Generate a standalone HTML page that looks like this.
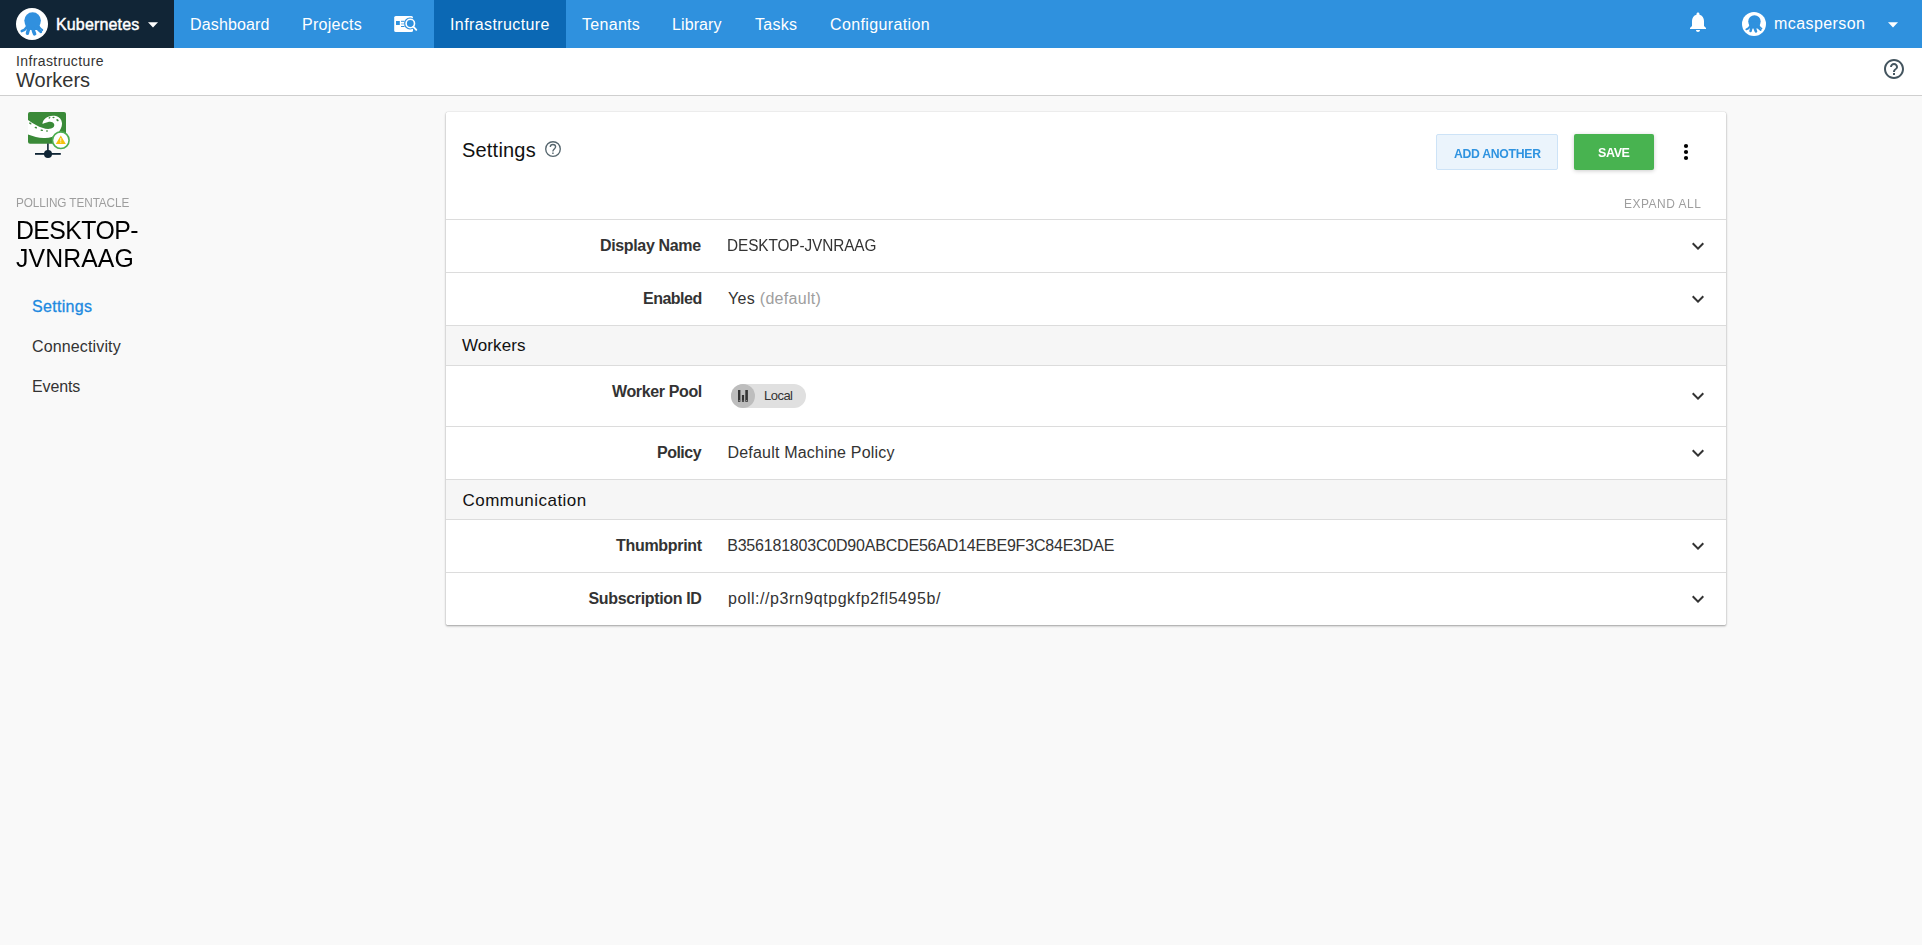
<!DOCTYPE html>
<html><head><meta charset="utf-8"><style>
*{box-sizing:border-box;margin:0;padding:0}
html,body{width:1922px;height:945px;overflow:hidden;background:#f9f9f9;font-family:"Liberation Sans",sans-serif;color:#333}
.t,.abs{position:absolute;white-space:nowrap}
.blk{position:absolute}
</style></head><body>

<div class="blk" style="left:0;top:0;width:1922px;height:48px;background:#2f91de"></div>
<div class="blk" style="left:0;top:0;width:174px;height:48px;background:#112536"></div>
<div class="blk" style="left:434px;top:0;width:132px;height:48px;background:#0b68b4"></div>
<div class="blk" style="left:0;top:48px;width:1922px;height:47px;background:#fff"></div>
<div class="blk" style="left:0;top:95px;width:1922px;height:1px;background:#cfcfcf"></div>
<!-- card -->
<div class="blk" style="left:446px;top:112px;width:1280px;height:513px;background:#fff;border-radius:1.5px;box-shadow:0 1px 3px rgba(0,0,0,.14),0 1px 2px rgba(0,0,0,.24),0 0 1px rgba(0,0,0,.22)"></div>
<div class="blk" style="left:446px;top:219px;width:1280px;height:1px;background:#dcdcdc"></div>
<div class="blk" style="left:446px;top:272px;width:1280px;height:1px;background:#dcdcdc"></div>
<div class="blk" style="left:446px;top:325px;width:1280px;height:41px;background:#f6f6f6;border-top:1px solid #dcdcdc;border-bottom:1px solid #dcdcdc"></div>
<div class="blk" style="left:446px;top:426px;width:1280px;height:1px;background:#dcdcdc"></div>
<div class="blk" style="left:446px;top:479px;width:1280px;height:41px;background:#f6f6f6;border-top:1px solid #dcdcdc;border-bottom:1px solid #dcdcdc"></div>
<div class="blk" style="left:446px;top:572px;width:1280px;height:1px;background:#dcdcdc"></div>
<!-- buttons -->
<div class="blk" style="left:1436px;top:134px;width:122px;height:36px;background:#ebf4fc;border:1px solid #cde3f7;border-radius:2px"></div>
<div class="blk" style="left:1574px;top:134px;width:80px;height:36px;background:#48b350;border-radius:2px;box-shadow:0 1px 4px rgba(0,0,0,.2)"></div>
<!-- chip -->
<div class="blk" style="left:731px;top:384px;width:75px;height:24px;background:#e0e0e0;border-radius:12px"></div>
<div class="blk" style="left:731px;top:384px;width:24px;height:24px;background:#bdbdbd;border-radius:12px"></div>


<!-- logo -->
<svg class="abs" style="left:16px;top:8px" width="32" height="32" viewBox="0 0 32 32">
 <circle cx="16" cy="16" r="16" fill="#fff"/>
 <circle cx="16.6" cy="12.5" r="8.3" fill="#3190de"/>
 <path d="M9.4 13 C9.3 17 9.6 19.5 10.8 21.5 L15.3 22 L20.9 22 L24.5 21.5 C23.4 19.5 23.6 17 23.8 13 Z" fill="#3190de"/><g fill="none" stroke="#3190de" stroke-linecap="round"><path d="M10.5 19.5 Q8.8 22.2 5.8 23.1" stroke-width="2.6"/><path d="M12.8 20.5 Q11.8 23.5 11.4 25.3" stroke-width="3.4"/><path d="M16.9 20.5 Q17.6 24 18.6 25.8" stroke-width="3.6"/><path d="M21.3 20.3 Q23.1 22.9 24.8 23.8" stroke-width="2.8"/><path d="M23 18.8 Q24.7 21.3 26.2 22" stroke-width="2"/></g>
</svg>
<svg class="abs" style="left:148px;top:22px" width="10" height="6" viewBox="0 0 10 6"><path d="M0 0.3h10L5 5.6z" fill="#fff"/></svg>
<!-- search icon -->
<svg class="abs" style="left:392px;top:14px" width="28" height="20" viewBox="392 14 28 20">
 <defs><mask id="sm"><rect x="392" y="14" width="28" height="20" fill="#fff"/><circle cx="410" cy="23.5" r="6" fill="#000"/></mask></defs>
 <rect x="394.2" y="16" width="18.8" height="16" rx="1.6" fill="#fff" mask="url(#sm)"/>
 <rect x="396" y="21" width="3.8" height="4" fill="#2f91de"/>
 <rect x="401" y="20.8" width="3.5" height="1" fill="#2f91de"/>
 <rect x="401" y="23.4" width="3.5" height="1" fill="#7fbbea"/>
 <rect x="401" y="26" width="3.5" height="1" fill="#2f91de"/>
 <circle cx="410.3" cy="23.5" r="4.2" fill="none" stroke="#fff" stroke-width="1.6"/>
 <path d="M413.3 26.6 L416.3 29.8" stroke="#fff" stroke-width="1.9" stroke-linecap="round"/>
</svg>
<!-- bell -->
<svg class="abs" style="left:1686px;top:9.8px" width="24" height="24" viewBox="0 0 24 24"><path fill="#fff" d="M12 22c1.1 0 2-.9 2-2h-4c0 1.1.89 2 2 2zm6-6v-5c0-3.07-1.64-5.64-4.5-6.32V4c0-.83-.67-1.5-1.5-1.5s-1.5.67-1.5 1.5v.68C7.63 5.36 6 7.92 6 11v5l-2 2v1h16v-1l-2-2z"/></svg>
<!-- avatar -->
<svg class="abs" style="left:1742px;top:12px" width="24" height="24" viewBox="0 0 32 32">
 <circle cx="16" cy="16" r="16" fill="#fff"/>
 <circle cx="16.6" cy="12.5" r="8.3" fill="#2f91de"/>
 <path d="M9.4 13 C9.3 17 9.6 19.5 10.8 21.5 L15.3 22 L20.9 22 L24.5 21.5 C23.4 19.5 23.6 17 23.8 13 Z" fill="#2f91de"/><g fill="none" stroke="#2f91de" stroke-linecap="round"><path d="M10.5 19.5 Q8.8 22.2 5.8 23.1" stroke-width="2.6"/><path d="M12.8 20.5 Q11.8 23.5 11.4 25.3" stroke-width="3.4"/><path d="M16.9 20.5 Q17.6 24 18.6 25.8" stroke-width="3.6"/><path d="M21.3 20.3 Q23.1 22.9 24.8 23.8" stroke-width="2.8"/><path d="M23 18.8 Q24.7 21.3 26.2 22" stroke-width="2"/></g>
</svg>
<svg class="abs" style="left:1888px;top:22px" width="10" height="6" viewBox="0 0 10 6"><path d="M0 0.3h10L5 5.6z" fill="#fff"/></svg>
<!-- header help -->
<svg class="abs" style="left:1882px;top:57px" width="24" height="24" viewBox="0 0 24 24"><path fill="#44555f" d="M11 18h2v-2h-2v2zm1-16C6.48 2 2 6.48 2 12s4.48 10 10 10 10-4.48 10-10S17.52 2 12 2zm0 18c-4.41 0-8-3.59-8-8s3.59-8 8-8 8 3.59 8 8-3.59 8-8 8zm0-14c-2.21 0-4 1.79-4 4h2c0-1.1.9-2 2-2s2 .9 2 2c0 2-3 1.75-3 5h2c0-2.25 3-2.5 3-5 0-2.21-1.79-4-4-4z"/></svg>
<!-- settings help -->
<svg class="abs" style="left:543px;top:138.5px" width="20" height="20" viewBox="543 138.5 20 20">
 <circle cx="553" cy="148.5" r="7.3" fill="none" stroke="#56666e" stroke-width="1.35"/>
 <path d="M550.3 146.4 C550.3 144.9 551.5 144 552.9 144 C554.5 144 555.6 145 555.6 146.3 C555.6 147.8 554.3 148.3 553.5 149.3 C553.1 149.8 552.9 150.3 552.9 150.9" fill="none" stroke="#56666e" stroke-width="1.35"/>
 <rect x="552.2" y="152" width="1.45" height="1.45" fill="#56666e"/>
</svg>
<!-- kebab -->
<svg class="abs" style="left:1682px;top:142px" width="8" height="20" viewBox="0 0 8 20"><circle cx="4" cy="4" r="2.1" fill="#000"/><circle cx="4" cy="10" r="2.1" fill="#000"/><circle cx="4" cy="16" r="2.1" fill="#000"/></svg>
<!-- chevrons -->
<svg class="abs" style="left:1686px;top:234px" width="24" height="24" viewBox="0 0 24 24"><path fill="#333" d="M16.59 8.59L12 13.17 7.41 8.59 6 10l6 6 6-6z"/></svg>
<svg class="abs" style="left:1686px;top:287px" width="24" height="24" viewBox="0 0 24 24"><path fill="#333" d="M16.59 8.59L12 13.17 7.41 8.59 6 10l6 6 6-6z"/></svg>
<svg class="abs" style="left:1686px;top:384px" width="24" height="24" viewBox="0 0 24 24"><path fill="#333" d="M16.59 8.59L12 13.17 7.41 8.59 6 10l6 6 6-6z"/></svg>
<svg class="abs" style="left:1686px;top:441px" width="24" height="24" viewBox="0 0 24 24"><path fill="#333" d="M16.59 8.59L12 13.17 7.41 8.59 6 10l6 6 6-6z"/></svg>
<svg class="abs" style="left:1686px;top:534px" width="24" height="24" viewBox="0 0 24 24"><path fill="#333" d="M16.59 8.59L12 13.17 7.41 8.59 6 10l6 6 6-6z"/></svg>
<svg class="abs" style="left:1686px;top:587px" width="24" height="24" viewBox="0 0 24 24"><path fill="#333" d="M16.59 8.59L12 13.17 7.41 8.59 6 10l6 6 6-6z"/></svg>

<!-- chip icon -->
<svg class="abs" style="left:730px;top:384px" width="26" height="24" viewBox="0 0 26 24">
 <rect x="8" y="6" width="2.4" height="11.8" fill="#333"/>
 <rect x="11.9" y="11" width="2.2" height="6.8" fill="#333"/>
 <rect x="15.3" y="6" width="2.6" height="11.8" fill="#333"/>
 <rect x="8.7" y="16.2" width="1" height="0.7" fill="#ccc"/>
 <rect x="12.5" y="16.2" width="1" height="0.7" fill="#777"/>
 <rect x="16.1" y="16.2" width="1" height="0.7" fill="#ccc"/>
</svg>
<!-- tentacle icon -->
<svg class="abs" style="left:24px;top:108px" width="52" height="52" viewBox="-4 -4 52 52">
 <defs><clipPath id="rc"><rect x="0" y="0" width="38" height="31.7" rx="2"/></clipPath></defs>
 <rect x="0" y="0" width="38" height="31.7" rx="2" fill="#3a8a38"/>
 <g clip-path="url(#rc)">
  <path d="M-1 22.2 C5 24.5 11 26.3 17 26 C22 25.8 26 25 29 22 C32.5 18.5 34.3 14 34 11 C33.6 7.5 31.5 5 28 4 C24 3 20 4.2 17.5 6.3 C15.5 8 14.2 10.5 14.6 12 C16.5 11.3 19 10.2 21 9.8 C23.5 9.4 26 10.5 26.3 12.7 C26.5 15 24.8 16.3 22 16.8 C18 17.4 13 15.8 8 13 C5 11.5 2 9.5 -1 7.2 Z" fill="#fff"/>
  <ellipse cx="2.3" cy="11.4" rx="1.3" ry="0.8" transform="rotate(35 2.3 11.4)" fill="#3a8a38"/>
  <ellipse cx="7.8" cy="15.6" rx="1.3" ry="0.8" transform="rotate(25 7.8 15.6)" fill="#3a8a38"/>
  <ellipse cx="13.7" cy="18.3" rx="1.3" ry="0.7" transform="rotate(10 13.7 18.3)" fill="#3a8a38"/>
  <ellipse cx="19" cy="19" rx="1" ry="0.7" fill="#3a8a38"/>
  <ellipse cx="21.5" cy="5.8" rx="1" ry="0.7" transform="rotate(-40 21.5 5.8)" fill="#3a8a38"/>
  <ellipse cx="25.5" cy="5.5" rx="1.1" ry="0.7" fill="#3a8a38"/>
  <ellipse cx="29.5" cy="8.2" rx="1.3" ry="0.9" transform="rotate(40 29.5 8.2)" fill="#3a8a38"/>
 </g>
 <rect x="19.1" y="31.5" width="1.6" height="7.5" fill="#0f2535"/>
 <rect x="7" y="41" width="25.8" height="1.8" fill="#0f2535"/>
 <circle cx="20" cy="41.9" r="4" fill="#0f2535"/>
 <circle cx="32.8" cy="28.2" r="8.3" fill="#fff" stroke="#4caf50" stroke-width="1.6"/>
 <path d="M32.8 23.5 L37.8 32 L27.8 32 Z" fill="#f4c20d"/>
 <rect x="32.4" y="26" width="0.8" height="3.5" fill="#fff"/>
 <rect x="32.4" y="30.3" width="0.8" height="0.8" fill="#fff"/>
</svg>

<div class="t" style="left:56px;top:17.46px;font-size:16px;line-height:16px;color:#fff;font-weight:normal;letter-spacing:0.15px;-webkit-text-stroke:0.45px #fff">Kubernetes</div>
<div class="t" style="left:190px;top:17.46px;font-size:16px;line-height:16px;color:#fff;font-weight:normal;letter-spacing:0.15px;">Dashboard</div>
<div class="t" style="left:302px;top:17.46px;font-size:16px;line-height:16px;color:#fff;font-weight:normal;letter-spacing:0.28px;">Projects</div>
<div class="t" style="left:450px;top:17.46px;font-size:16px;line-height:16px;color:#fff;font-weight:normal;letter-spacing:0.4px;">Infrastructure</div>
<div class="t" style="left:582px;top:17.46px;font-size:16px;line-height:16px;color:#fff;font-weight:normal;letter-spacing:0.3px;">Tenants</div>
<div class="t" style="left:672px;top:17.46px;font-size:16px;line-height:16px;color:#fff;font-weight:normal;letter-spacing:0.1px;">Library</div>
<div class="t" style="left:755px;top:17.46px;font-size:16px;line-height:16px;color:#fff;font-weight:normal;letter-spacing:0.3px;">Tasks</div>
<div class="t" style="left:830px;top:17.46px;font-size:16px;line-height:16px;color:#fff;font-weight:normal;letter-spacing:0.37px;">Configuration</div>
<div class="t" style="left:1774px;top:16.46px;font-size:16px;line-height:16px;color:#fff;font-weight:normal;letter-spacing:0.42px;">mcasperson</div>
<div class="t" style="left:16px;top:54.15px;font-size:14px;line-height:14px;color:#333;font-weight:normal;letter-spacing:0.39px;">Infrastructure</div>
<div class="t" style="left:16px;top:70.07px;font-size:20px;line-height:20px;color:#333;font-weight:normal;letter-spacing:0px;">Workers</div>
<div class="t" style="left:16px;top:197.33px;font-size:12.6px;line-height:12.6px;color:#9e9e9e;font-weight:normal;letter-spacing:-0.1px;transform:scaleX(0.935);transform-origin:0 0">POLLING TENTACLE</div>
<div class="t" style="left:16px;top:217.40px;font-size:26.7px;line-height:26.7px;color:#000;font-weight:normal;letter-spacing:-0.6px;transform:scaleX(0.93);transform-origin:0 0">DESKTOP-</div>
<div class="t" style="left:16px;top:245.40px;font-size:26.7px;line-height:26.7px;color:#000;font-weight:normal;letter-spacing:0.1px;transform:scaleX(0.93);transform-origin:0 0">JVNRAAG</div>
<div class="t" style="left:32px;top:299.46px;font-size:16px;line-height:16px;color:#2089e0;font-weight:normal;letter-spacing:0.3px;-webkit-text-stroke:0.3px #2089e0">Settings</div>
<div class="t" style="left:32px;top:339.46px;font-size:16px;line-height:16px;color:#333;font-weight:normal;letter-spacing:0.14px;">Connectivity</div>
<div class="t" style="left:32px;top:379.46px;font-size:16px;line-height:16px;color:#333;font-weight:normal;letter-spacing:-0.12px;">Events</div>
<div class="t" style="left:462px;top:140.07px;font-size:20px;line-height:20px;color:#111;font-weight:normal;letter-spacing:0.2px;">Settings</div>
<div class="t" style="left:1454px;top:147.00px;font-size:13px;line-height:13px;color:#2f93e0;font-weight:bold;letter-spacing:-0.3px;transform:scaleX(0.94);transform-origin:0 0">ADD ANOTHER</div>
<div class="t" style="left:1598px;top:146.00px;font-size:13px;line-height:13px;color:#fff;font-weight:bold;letter-spacing:-0.4px;transform:scaleX(0.96);transform-origin:0 0">SAVE</div>
<div class="t" style="left:1624px;top:197.00px;font-size:13px;line-height:13px;color:#9e9e9e;font-weight:normal;letter-spacing:0.55px;transform:scaleX(0.92);transform-origin:0 0">EXPAND ALL</div>
<div class="t" style="left:600px;top:238.46px;font-size:16px;line-height:16px;color:#333;font-weight:bold;letter-spacing:-0.35px;">Display Name</div>
<div class="t" style="left:643px;top:291.46px;font-size:16px;line-height:16px;color:#333;font-weight:bold;letter-spacing:-0.5px;">Enabled</div>
<div class="t" style="left:612px;top:384.46px;font-size:16px;line-height:16px;color:#333;font-weight:bold;letter-spacing:-0.37px;">Worker Pool</div>
<div class="t" style="left:657px;top:445.46px;font-size:16px;line-height:16px;color:#333;font-weight:bold;letter-spacing:-0.52px;">Policy</div>
<div class="t" style="left:616px;top:538.46px;font-size:16px;line-height:16px;color:#333;font-weight:bold;letter-spacing:-0.3px;">Thumbprint</div>
<div class="t" style="left:588.5px;top:591.46px;font-size:16px;line-height:16px;color:#333;font-weight:bold;letter-spacing:-0.35px;">Subscription ID</div>
<div class="t" style="left:727px;top:238.46px;font-size:16px;line-height:16px;color:#333;font-weight:normal;letter-spacing:-0.1px;transform:scaleX(0.96);transform-origin:0 0">DESKTOP-JVNRAAG</div>
<div class="t" style="left:728px;top:291.46px;font-size:16px;line-height:16px;color:#333;font-weight:normal;letter-spacing:0.3px;">Yes <span style="color:#9e9e9e">(default)</span></div>
<div class="t" style="left:727.5px;top:445.46px;font-size:16px;line-height:16px;color:#333;font-weight:normal;letter-spacing:0.2px;">Default Machine Policy</div>
<div class="t" style="left:727.2px;top:538.46px;font-size:16px;line-height:16px;color:#333;font-weight:normal;letter-spacing:-0.2px;">B356181803C0D90ABCDE56AD14EBE9F3C84E3DAE</div>
<div class="t" style="left:728px;top:591.46px;font-size:16px;line-height:16px;color:#333;font-weight:normal;letter-spacing:0.55px;">poll://p3rn9qtpgkfp2fl5495b/</div>
<div class="t" style="left:462px;top:336.61px;font-size:17px;line-height:17px;color:#111;font-weight:normal;letter-spacing:0.08px;">Workers</div>
<div class="t" style="left:462.5px;top:491.61px;font-size:17px;line-height:17px;color:#111;font-weight:normal;letter-spacing:0.47px;">Communication</div>
<div class="t" style="left:764px;top:389.00px;font-size:13px;line-height:13px;color:#333;font-weight:normal;letter-spacing:-0.52px;">Local</div>

</body></html>
